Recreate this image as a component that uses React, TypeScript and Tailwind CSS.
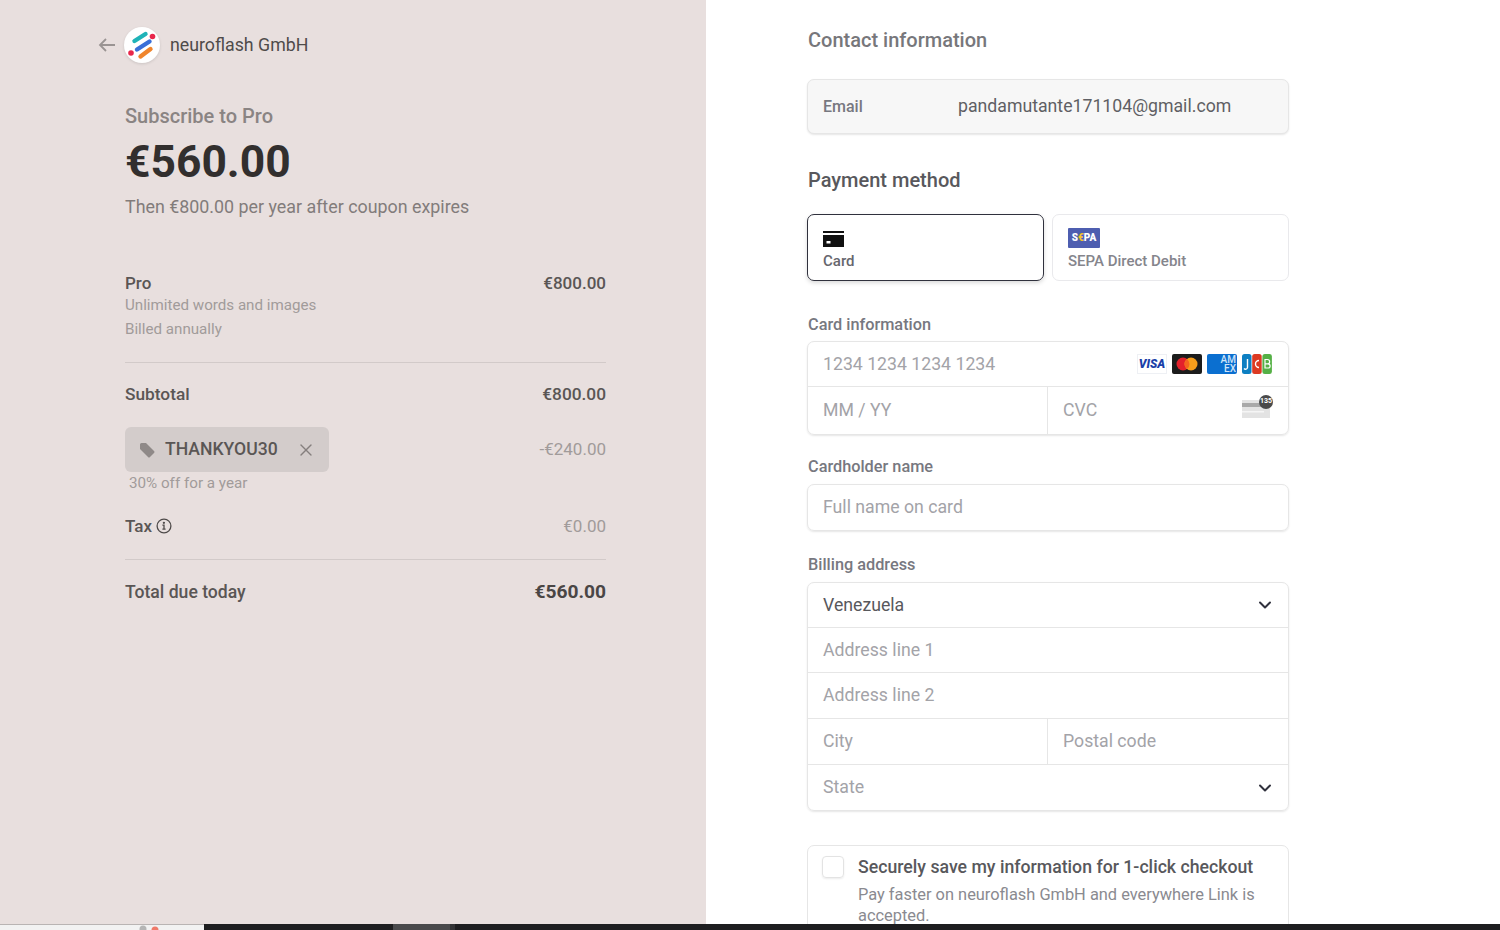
import { ChevronDown, X } from 'lucide-react';

const roboto = "font-['Roboto',sans-serif]";

function Logo() {
  return (
    <div className="w-[36px] h-[36px] rounded-full bg-white flex items-center justify-center shadow-[0_1px_3px_rgba(0,0,0,0.12)]">
      <svg width="36" height="36" viewBox="0 0 36 36" fill="none" strokeLinecap="round">
        <path d="M10.5 14 L21.5 7" stroke="#1fb3b8" strokeWidth="4.4" />
        <path d="M13 22.5 L25.5 14.5" stroke="#3a6fd8" strokeWidth="4.4" />
        <path d="M16.5 29.5 L26.5 22" stroke="#f0852c" strokeWidth="4.4" />
        <circle cx="28.5" cy="9.5" r="2.8" fill="#e8274b" />
        <circle cx="7" cy="26" r="2.8" fill="#e8274b" />
      </svg>
    </div>
  );
}

function PriceRow({ label, price, className }: { label: string; price: string; className?: string }) {
  return (
    <div className={`flex justify-between items-center ${className ?? ''}`}>
      <span>{label}</span>
      <span>{price}</span>
    </div>
  );
}

function Label({ children }: { children: string }) {
  return <div className="text-[16.3px] leading-[20px] font-medium text-[#777880]">{children}</div>;
}

function Field({ placeholder, className }: { placeholder: string; className?: string }) {
  return (
    <div className={`flex items-center px-[15px] text-[17.7px] text-[#a3a3a8] ${className ?? ''}`}>{placeholder}</div>
  );
}

function CardBrands() {
  return (
    <div className="flex items-center gap-[5px]">
      <div className="w-[30px] h-[20px] bg-white border border-[#eef0f4] flex items-center justify-center text-[12px] font-black italic leading-none text-[#1a3fa8]">
        VISA
      </div>
      <svg width="30" height="20" viewBox="0 0 30 20">
        <rect width="30" height="20" rx="2" fill="#1c1c1c" />
        <circle cx="11" cy="10" r="6.5" fill="#e3202b" />
        <circle cx="19" cy="10" r="6.5" fill="#f79e1b" />
        <path d="M15 4.9a6.5 6.5 0 0 1 0 10.2a6.5 6.5 0 0 1 0-10.2z" fill="#f4641f" />
      </svg>
      <div className="w-[30px] h-[20px] rounded-[2px] bg-[#0b6fd0] flex flex-col items-end justify-center pr-[1px] text-[10px] leading-[9px] font-medium text-[#cfe4f8]">
        <span>AM</span>
        <span>EX</span>
      </div>
      <svg width="30" height="20" viewBox="0 0 30 20">
        <rect x="0" width="9.5" height="20" rx="2.5" fill="#0d7fc2" />
        <rect x="10.2" width="9.5" height="20" rx="2.5" fill="#dc3a22" />
        <rect x="20.4" width="9.5" height="20" rx="2.5" fill="#55b046" />
        <path d="M5.5 5v8.5a2 2 0 0 1-3.5 1" stroke="#fff" strokeWidth="1.4" fill="none" />
        <path d="M17 6.5a3.4 3.4 0 1 0 0 7" stroke="#fff" strokeWidth="1.4" fill="none" />
        <path d="M23 5.5h2.5a1.6 1.6 0 0 1 0 4.3H23h3a1.8 1.8 0 0 1 0 4.2h-3z" stroke="#fff" strokeWidth="1.2" fill="none" />
      </svg>
    </div>
  );
}

function CvcIcon() {
  return (
    <div className="relative w-[28px] h-[20px] mb-[6px]">
      <svg width="28" height="20" viewBox="0 0 28 20" className="absolute left-0 top-0">
        <rect x="0" y="2" width="28" height="18" fill="#e3e3e3" />
        <rect x="0" y="5" width="28" height="4" fill="#a9a9a9" />
        <rect x="0" y="13" width="22" height="1.5" fill="#f5f5f5" />
      </svg>
      <div className="absolute -right-[3px] -top-[3px] w-[14px] h-[14px] rounded-full bg-[#4a4a4a] flex items-center justify-center text-[7px] font-bold text-white">
        135
      </div>
    </div>
  );
}

export default function App() {
  return (
    <div className={`h-[930px] w-full flex flex-col overflow-hidden bg-white ${roboto}`}>
      <div className="flex flex-1 min-h-0">
        {/* Summary */}
        <div className="w-[706px] shrink-0 bg-[#e8dfde] text-[#4a4645]">
          <div className="flex items-center mt-[27px] pl-[98px] h-[36px]">
            <svg width="18" height="14" viewBox="0 0 18 14" fill="none" stroke="#9a9493" strokeWidth="1.8" className="mr-[8px]">
              <path d="M17 7H2M8 1 2 7l6 6" />
            </svg>
            <Logo />
            <span className="ml-[10px] text-[17.75px] text-[#4f4b4a]">neuroflash GmbH</span>
          </div>

          <div className="w-[481px] ml-[125px]">
            <div className="mt-[40px] text-[20px] leading-[26px] font-medium text-[#8a8483]">Subscribe to Pro</div>
            <div className="mt-[6px] text-[44.4px] leading-[54px] font-bold text-[#322f2e]">€560.00</div>
            <div className="mt-[6px] text-[17.85px] leading-[24px] text-[#827c7b]">Then €800.00 per year after coupon expires</div>

            <PriceRow
              label="Pro"
              price="€800.00"
              className="mt-[52px] text-[17px] leading-[24px] font-medium text-[#5a5655]"
            />
            <div className="-mt-[2px] text-[15.15px] leading-[24px] text-[#a19b9a]">
              <div>Unlimited words and images</div>
              <div>Billed annually</div>
            </div>

            <div className="mt-[21px] h-px bg-[#d2cac9]" />

            <PriceRow
              label="Subtotal"
              price="€800.00"
              className="mt-[19px] text-[17.3px] leading-[24px] font-medium text-[#5a5655]"
            />

            <div className="mt-[21px] flex justify-between items-center">
              <div className="w-[204px] h-[45px] rounded-[6px] bg-[#d3cccb] flex items-center pl-[14px] text-[17.6px] font-medium text-[#5a5655]">
                <svg width="16" height="16" viewBox="0 0 16 16" fill="#8f8988">
                  <path d="M1 2.5A1.5 1.5 0 0 1 2.5 1H7l8 8a1.4 1.4 0 0 1 0 2l-4 4a1.4 1.4 0 0 1-2 0L1 7z" />
                </svg>
                <span className="ml-[10px]">THANKYOU30</span>
                <X size={20} strokeWidth={1.6} className="ml-[18px] text-[#857f7e]" />
              </div>
              <span className="text-[17px] text-[#a19b9a]">-€240.00</span>
            </div>
            <div className="mt-[1px] ml-[4px] text-[15.2px] leading-[20px] text-[#a19b9a]">30% off for a year</div>

            <div className="mt-[21px] flex justify-between items-center text-[17px] leading-[24px]">
              <span className="flex items-center gap-[4px] font-medium text-[#5a5655]">
                Tax
                <svg width="16" height="16" viewBox="0 0 16 16" fill="none" stroke="#4f4b4a" strokeWidth="1.3">
                  <circle cx="8" cy="8" r="6.9" />
                  <path d="M6.4 7.2H8v4M6.4 11.2h3.2" />
                  <circle cx="7.9" cy="4.8" r="0.5" fill="#4f4b4a" />
                </svg>
              </span>
              <span className="text-[#a19b9a]">€0.00</span>
            </div>

            <div className="mt-[21px] h-px bg-[#d2cac9]" />

            <div className="mt-[20px] flex justify-between items-center font-medium text-[#5a5655]">
              <span className="text-[17.6px] leading-[24px]">Total due today</span>
              <span className="text-[19.2px] leading-[24px] font-bold text-[#4a4645]">€560.00</span>
            </div>
          </div>
        </div>

        {/* Payment form */}
        <div className="flex-1 min-w-0 pl-[101px] overflow-hidden">
          <div className="w-[482px]">
            <div className="mt-[27px] ml-px text-[20px] leading-[26px] font-medium text-[#77777b]">Contact information</div>

            <div className="mt-[26px] h-[55px] rounded-[7px] border border-[#e6e6e6] bg-[#f7f7f7] shadow-[0_1px_2px_rgba(0,0,0,0.1)] flex items-center px-[15px]">
              <span className="w-[135px] text-[16px] font-medium text-[#777880]">Email</span>
              <span className="text-[17.7px] text-[#5f5f64]">pandamutante171104@gmail.com</span>
            </div>

            <div className="mt-[33px] ml-px text-[20px] leading-[26px] font-medium text-[#58585c]">Payment method</div>

            <div className="mt-[21px] flex gap-[8px]">
              <div className="flex-1 h-[67px] rounded-[7px] border border-[#30313d] shadow-[0_2px_4px_rgba(0,0,0,0.15)] px-[15px] pt-[16px]">
                <svg width="21" height="16" viewBox="0 0 21 16" className="block">
                  <rect width="21" height="2" fill="#111" />
                  <rect y="4" width="21" height="12" fill="#111" />
                  <rect x="3.5" y="10" width="4" height="2.5" fill="#fff" />
                </svg>
                <div className="mt-[4px] text-[15px] leading-[20px] font-medium text-[#66666d]">Card</div>
              </div>
              <div className="flex-1 h-[67px] rounded-[7px] border border-[#e9e9ec] px-[15px] pt-[13px]">
                <div className="w-[32px] h-[20px] bg-[#4e5eb0] rounded-[1px] flex items-center justify-center text-[10px] leading-none font-black text-white">
                  S<span className="text-[#f2c230]">€</span>PA
                </div>
                <div className="mt-[3px] text-[15px] leading-[20px] font-medium text-[#85858c]">SEPA Direct Debit</div>
              </div>
            </div>

            <div className="mt-[34px] ml-px"><Label>Card information</Label></div>
            <div className="mt-[6px] rounded-[7px] border border-[#e6e6e6] shadow-[0_1px_2px_rgba(0,0,0,0.1)] divide-y divide-[#e6e6e6]">
              <div className="h-[45px] flex items-center justify-between pr-[16px]">
                <Field placeholder="1234 1234 1234 1234" />
                <CardBrands />
              </div>
              <div className="h-[47px] flex">
                <Field placeholder="MM / YY" className="w-[240px] border-r border-[#e6e6e6]" />
                <div className="flex-1 flex items-center justify-between pr-[18px]">
                  <Field placeholder="CVC" />
                  <CvcIcon />
                </div>
              </div>
            </div>

            <div className="mt-[22px] ml-px"><Label>Cardholder name</Label></div>
            <div className="mt-[7px] h-[47px] flex rounded-[7px] border border-[#e6e6e6] shadow-[0_1px_2px_rgba(0,0,0,0.1)]">
              <Field placeholder="Full name on card" />
            </div>

            <div className="mt-[24px] ml-px"><Label>Billing address</Label></div>
            <div className="mt-[7px] rounded-[7px] border border-[#e6e6e6] shadow-[0_1px_2px_rgba(0,0,0,0.1)] divide-y divide-[#e6e6e6]">
              <div className="h-[45px] flex items-center justify-between pr-[13px]">
                <Field placeholder="Venezuela" className="!text-[#58585c]" />
                <ChevronDown size={20} strokeWidth={2.4} className="text-[#30313d]" />
              </div>
              <Field placeholder="Address line 1" className="h-[45px]" />
              <Field placeholder="Address line 2" className="h-[46px]" />
              <div className="h-[46px] flex">
                <Field placeholder="City" className="w-[240px] border-r border-[#e6e6e6]" />
                <Field placeholder="Postal code" />
              </div>
              <div className="h-[45px] flex items-center justify-between pr-[13px]">
                <Field placeholder="State" />
                <ChevronDown size={20} strokeWidth={2.4} className="text-[#30313d]" />
              </div>
            </div>

            <div className="mt-[34px] h-[120px] rounded-[7px] border border-[#e6e6e6] flex pl-[14px] pt-[10px]">
              <div className="w-[22px] h-[22px] rounded-[4px] border border-[#e3e3e3] shadow-[0_1px_2px_rgba(0,0,0,0.08)] shrink-0" />
              <div className="ml-[14px] w-[410px]">
                <div className="text-[17.7px] leading-[22px] font-medium text-[#58585c]">Securely save my information for 1-click checkout</div>
                <div className="mt-[6px] text-[16.4px] leading-[21px] text-[#8a8a90]">Pay faster on neuroflash GmbH and everywhere Link is accepted.</div>
              </div>
            </div>
          </div>
        </div>
      </div>

      {/* Strip of the desktop taskbar along the bottom */}
      <div className="h-[6px] shrink-0 flex bg-[#1e1e20]">
        <div className="w-[204px] bg-[#f2f2f2] border-t border-[#b9b4b3] pl-[136px]">
          <svg width="24" height="5" viewBox="0 0 24 5" className="block">
            <circle cx="7" cy="4" r="3.5" fill="#b5b5b5" />
            <circle cx="19" cy="5" r="3.5" fill="#ef7a6a" />
          </svg>
        </div>
        <div className="ml-[189px] w-[57px] bg-[#4a4a4c]" />
        <div className="w-[5px] bg-[#333335]" />
      </div>
    </div>
  );
}
